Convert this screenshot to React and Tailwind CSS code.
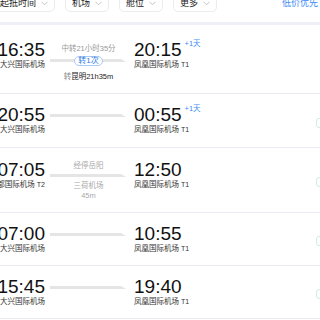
import React from "react";

const filters = ["起抵时间", "机场", "舱位", "更多"];

const flights = [
  {
    dep: "16:35",
    depAp: "大兴国际机场",
    arr: "20:15",
    arrAp: "凤凰国际机场",
    arrT: "T1",
    plus: true,
    kind: "transfer",
    rowCls: "h-[69px]",
    timeCls: "mt-[15px]",
    midCls: "mt-[18.5px]",
  },
  {
    dep: "20:55",
    depAp: "大兴国际机场",
    arr: "00:55",
    arrAp: "凤凰国际机场",
    arrT: "T1",
    plus: true,
    tag: true,
    rowCls: "h-[54px]",
    timeCls: "mt-[11px]",
    midCls: "mt-[18.5px]",
  },
  {
    dep: "07:05",
    depAp: "首都国际机场",
    depT: "T2",
    arr: "12:50",
    arrAp: "凤凰国际机场",
    arrT: "T1",
    kind: "stop",
    tag: true,
    rowCls: "h-[65px]",
    timeCls: "mt-[12px]",
    midCls: "mt-[12.5px]",
  },
  {
    dep: "07:00",
    depAp: "大兴国际机场",
    arr: "10:55",
    arrAp: "凤凰国际机场",
    arrT: "T1",
    tag: true,
    rowCls: "h-[53px]",
    timeCls: "mt-[11px]",
    midCls: "mt-[18.5px]",
  },
  {
    dep: "15:45",
    depAp: "大兴国际机场",
    arr: "19:40",
    arrAp: "凤凰国际机场",
    arrT: "T1",
    tag: true,
    rowCls: "h-[53px]",
    timeCls: "mt-[11px]",
    midCls: "mt-[18.5px]",
  },
];

const Chevron = () => (
  <svg width="7" height="5" viewBox="0 0 7 5" className="block">
    <polyline points="0.5,0.8 3.5,3.8 6.5,0.8" fill="none" stroke="#c4c4c4" strokeWidth="1" />
  </svg>
);

// grey route line with the slanted tip
const Route = () => (
  <svg width="77" height="5" viewBox="0 0 77 5" className="block">
    <path d="M0 1H71L76 4H0Z" fill="#e5e5e5" />
  </svg>
);

const Airport = ({ name, term }) => (
  <div className="whitespace-nowrap text-[7.5px] leading-[10px] text-[#333]">
    {name}
    {term && <span className="ml-[2px] text-[7px]">{term}</span>}
  </div>
);

const Middle = ({ f }) => {
  if (f.kind === "transfer") {
    return (
      <>
        <div className="whitespace-nowrap text-[7.5px] leading-[10px] text-[#999]">中转21小时35分</div>
        <div className="mt-[2px] grid h-[10px] w-full place-items-center">
          <div className="[grid-area:1/1] self-center">
            <Route />
          </div>
          <div className="[grid-area:1/1] rounded-full border border-[#aac9f3] bg-white px-[3px] text-[8px] leading-[8px] text-[#2d7be5]">
            转1次
          </div>
        </div>
        <div className="mt-[6px] whitespace-nowrap text-[7.5px] leading-[10px] text-[#222]">
          <span className="text-[#888]">转</span>昆明21h35m
        </div>
      </>
    );
  }
  if (f.kind === "stop") {
    return (
      <>
        <div className="whitespace-nowrap text-[7.5px] leading-[10px] text-[#aaa]">经停岳阳</div>
        <div className="mt-[2px]">
          <Route />
        </div>
        <div className="mt-[3px] whitespace-nowrap text-[7.5px] leading-[10px] text-[#aaa]">三荷机场</div>
        <div className="text-[7.5px] leading-[10px] text-[#aaa]">45m</div>
      </>
    );
  }
  return <Route />;
};

export default function App() {
  return (
    <div className="h-[320px] w-[320px] overflow-hidden bg-white font-['Liberation_Sans','Noto_Sans_CJK_SC',sans-serif] text-[#111]">
      {/* filter bar */}
      <div className="flex h-[22px] items-start">
        <div className="-ml-[7px] -mt-[6px] flex h-[18px] w-[327px] items-center gap-[10px]">
          {filters.map((f) => (
            <div
              key={f}
              className="flex h-[18px] items-center gap-[5px] rounded-[5px] border border-[#ececec] bg-white pl-[6px] pr-[6px] text-[9px] leading-[10px] text-[#222]"
            >
              {f}
              <Chevron />
            </div>
          ))}
          <span className="ml-auto pr-[2px] text-[9px] leading-[10px] text-[#3d8af7]">低价优先</span>
        </div>
      </div>
      <div className="h-[3px] bg-[#eef0f6]" />

      {flights.map((f) => (
        <div key={f.dep} className={`flex items-start border-b border-[#e9ecf3] ${f.rowCls}`}>
          {/* departure */}
          <div className={`flex w-[45px] shrink-0 flex-col items-end ${f.timeCls}`}>
            <div className="whitespace-nowrap text-[19px] leading-[20px]">{f.dep}</div>
            <Airport name={f.depAp} term={f.depT} />
          </div>

          {/* route */}
          <div className={`ml-[5px] flex w-[77px] shrink-0 flex-col items-center ${f.midCls}`}>
            <Middle f={f} />
          </div>

          {/* arrival */}
          <div className={`ml-[7px] flex flex-col ${f.timeCls}`}>
            <div className="flex items-start">
              <div className="whitespace-nowrap text-[19px] leading-[20px]">{f.arr}</div>
              {f.plus && (
                <span className="-mt-[1px] ml-[3px] whitespace-nowrap text-[7.5px] leading-[10px] text-[#3d8af7]">
                  +1天
                </span>
              )}
            </div>
            <Airport name={f.arrAp} term={f.arrT} />
          </div>

          {f.tag && (
            <div className="-mr-[16px] ml-auto mt-[4px] h-[10px] w-[20px] shrink-0 self-center rounded-[3px] border border-[#cdeee3]" />
          )}
        </div>
      ))}
    </div>
  );
}
